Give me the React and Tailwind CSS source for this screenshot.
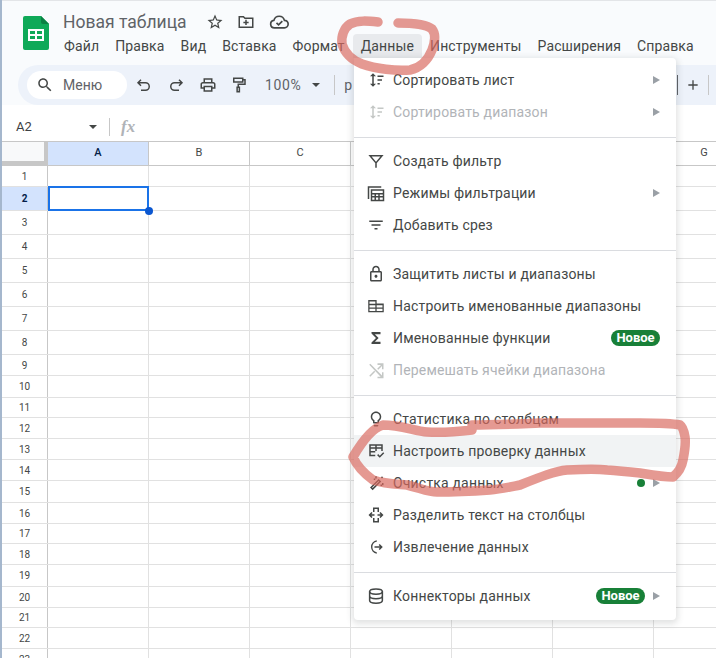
import React from "react";

const rowHeights = [21, 24, 24, 24, 24, 24, 24, 24, 21, 22, 20, 21, 21, 21, 22, 21, 20, 21, 22, 21, 20, 21, 21];
const columns = ["A", "B", "C", "D", "E", "F", "G"];
const topMenu = ["Файл", "Правка", "Вид", "Вставка", "Формат", "Данные", "Инструменты", "Расширения", "Справка"];

const Svg = ({ children, size = 18, className = "" }) => (
  <svg width={size} height={size} viewBox="0 0 24 24" fill="currentColor" className={"shrink-0 " + className}>
    {children}
  </svg>
);

const Line = ({ children, width = 2 }) => (
  <svg width="18" height="18" viewBox="0 0 24 24" fill="none" stroke="currentColor" strokeWidth={width} className="shrink-0">
    {children}
  </svg>
);

const SortIcon = () => (
  <Svg>
    <path d="M8 3l4 4H9v10h3l-4 4-4-4h3V7H4z" />
    <path d="M14 6h8v2h-8zM14 11h6v2h-6zM14 16h3v2h-3z" />
  </Svg>
);
const FilterIcon = () => (
  <Line>
    <path d="M4 5h16l-8 9.500zM12 14v7" />
  </Line>
);
const FilterViewsIcon = () => (
  <Svg>
    <path d="M1 3h18v2H3v15H1zM5 7h18v16H5zm2 2v3h14V9zm0 5v2h3v-2zm5 0v2h3v-2zm5 0v2h4v-2zM7 18v3h3v-3zm5 0v3h3v-3zm5 0v3h4v-3z" fillRule="evenodd" />
  </Svg>
);
const SlicerIcon = () => (
  <Svg>
    <path d="M3 6h18v2H3zM6 11h12v2H6zM10 16h4v2h-4z" />
  </Svg>
);
const LockIcon = () => (
  <Svg>
    <path d="M18 8h-1V6c0-2.760-2.240-5-5-5S7 3.240 7 6v2H6c-1.100 0-2 .900-2 2v10c0 1.100.900 2 2 2h12c1.100 0 2-.900 2-2V10c0-1.100-.900-2-2-2zM9 6c0-1.660 1.340-3 3-3s3 1.340 3 3v2H9V6zm9 14H6V10h12v10zm-6-3c1.100 0 2-.900 2-2s-.900-2-2-2-2 .900-2 2 .900 2 2 2z" />
  </Svg>
);
const NamedRangeIcon = () => (
  <Line width={1.7}>
    <path d="M2.500 5h9.500v14.500H2.500zM12 9.500h9.500v10H12M2.500 10h19M2.500 14.700h19" />
  </Line>
);
const SigmaIcon = () => (
  <Svg>
    <path d="M6 4h12v3H10.500l5 5-5 5H18v3H6v-2l6-6-6-6z" />
  </Svg>
);
const ShuffleIcon = () => (
  <Svg>
    <path d="M3 5l1.400-1.400L20 19.200V15h2v8h-8v-2h4.200zM14 3h8v8h-2V6.800l-5 5-1.400-1.400 5-5H14zM9.600 13l1.400 1.400-6.600 6.600L3 19.600z" />
  </Svg>
);
const BulbIcon = () => (
  <Svg>
    <path d="M9 21c0 .550.450 1 1 1h4c.550 0 1-.450 1-1v-1H9v1zm3-19C8.140 2 5 5.140 5 9c0 2.380 1.190 4.470 3 5.740V17c0 .550.450 1 1 1h6c.550 0 1-.450 1-1v-2.260c1.810-1.270 3-3.360 3-5.740 0-3.860-3.140-7-7-7zm2.850 11.100l-.850.600V16h-4v-2.300l-.850-.600C7.800 12.160 7 10.630 7 9c0-2.760 2.240-5 5-5s5 2.240 5 5c0 1.630-.800 3.160-2.150 4.100z" />
  </Svg>
);
const ValidationIcon = () => (
  <Svg>
    <path d="M3 3h18v9h-2V9h-6v3h-2V9H5v3h6v2H5v3h6v2H3zm10 2v2h6V5zM5 5v2h6V5z" fillRule="evenodd" />
    <path d="M13.500 17.500l1.400-1.400 2.100 2.100 4.600-4.600 1.400 1.400-6 6z" />
  </Svg>
);
const WandIcon = () => (
  <Svg>
    <path d="M15.500 6.500l3.500 3.500L7.500 21.500 4 18zm0 2.800L6.800 18l.7.700 8.700-8.700z" fillRule="evenodd" />
    <path d="M11 3h2v3h-2zM20 3l1.500 1.500L20 6l-1.500-1.500zM20 12h2v3h-2zM9 6h2v2H9zM18 14h2v2h-2z" />
  </Svg>
);
const SplitIcon = () => (
  <Svg>
    <path d="M8 2h8v6h-2V4h-4v4H8zM8 16h2v4h4v-4h2v6H8zM6 8l1.400 1.400L5.800 11H10v2H5.800l1.600 1.600L6 16l-4-4zM18 8l4 4-4 4-1.400-1.400 1.600-1.600H14v-2h4.200l-1.600-1.600z" />
  </Svg>
);
const ExtractIcon = () => (
  <Svg>
    <path d="M13 3.100v2A7 7 0 0 0 13 18.900v2A9 9 0 0 1 13 3.100z" />
    <path d="M17 8l4 4-4 4-1.400-1.400 1.600-1.600H10v-2h7.200l-1.600-1.600z" />
  </Svg>
);
const DatabaseIcon = () => (
  <Line>
    <ellipse cx="12" cy="6" rx="8.500" ry="3.500" />
    <path d="M3.500 6v12c0 1.900 3.800 3.500 8.500 3.500s8.500-1.600 8.500-3.500V6M3.500 12c0 1.900 3.800 3.500 8.500 3.500s8.500-1.600 8.500-3.500" />
  </Line>
);

const Arrow = () => <span className="ml-2 w-0 h-0 border-y-[4px] border-y-transparent border-l-[7px] border-l-[#9aa0a6]" />;

const Badge = () => (
  <span className="h-4 w-[49px] text-center rounded-full bg-[#188038] text-white text-[13px] leading-4 font-bold">Новое</span>
);

const MenuItem = ({ icon, label, disabled, active, arrow, badge, dot }) => (
  <div className={"h-8 flex items-center pl-[13px] pr-[16px] " + (active ? "bg-[#f1f3f4] " : "") + (disabled ? "text-[#b1b4b8]" : "text-[#444746]")}>
    <span className={"w-[26px] flex " + (disabled ? "text-[#c4c7c5]" : "")}>{icon}</span>
    <span className="flex-1 text-[14px] tracking-[0.18px] whitespace-nowrap">{label}</span>
    {badge && <Badge />}
    {dot && <span className="w-2 h-2 rounded-full bg-[#188038]" />}
    {arrow && <Arrow />}
  </div>
);

const Separator = () => <div className="h-px bg-[#dadce0] mt-[9px] mb-[7px]" />;

const DataMenu = () => (
  <div className="absolute left-[354px] top-[58px] w-[322px] pt-[6px] pb-2 bg-white rounded-b rounded-tr shadow-[0_2px_6px_2px_rgba(60,64,67,0.15)]">
    <MenuItem icon={<SortIcon />} label="Сортировать лист" arrow />
    <MenuItem icon={<SortIcon />} label="Сортировать диапазон" disabled arrow />
    <Separator />
    <MenuItem icon={<FilterIcon />} label="Создать фильтр" />
    <MenuItem icon={<FilterViewsIcon />} label="Режимы фильтрации" arrow />
    <MenuItem icon={<SlicerIcon />} label="Добавить срез" />
    <Separator />
    <MenuItem icon={<LockIcon />} label="Защитить листы и диапазоны" />
    <MenuItem icon={<NamedRangeIcon />} label="Настроить именованные диапазоны" />
    <MenuItem icon={<SigmaIcon />} label="Именованные функции" badge />
    <MenuItem icon={<ShuffleIcon />} label="Перемешать ячейки диапазона" disabled />
    <Separator />
    <MenuItem icon={<BulbIcon />} label="Статистика по столбцам" />
    <MenuItem icon={<ValidationIcon />} label="Настроить проверку данных" active />
    <MenuItem icon={<WandIcon />} label="Очистка данных" dot arrow />
    <MenuItem icon={<SplitIcon />} label="Разделить текст на столбцы" />
    <MenuItem icon={<ExtractIcon />} label="Извлечение данных" />
    <Separator />
    <MenuItem icon={<DatabaseIcon />} label="Коннекторы данных" badge arrow />
  </div>
);

const SheetsLogo = () => (
  <svg width="26" height="34" viewBox="0 0 26 34" className="shrink-0">
    <path d="M2 0h16l8 8v24a2 2 0 0 1-2 2H2a2 2 0 0 1-2-2V2a2 2 0 0 1 2-2z" fill="#0fa958" />
    <path d="M18 0l8 8h-6a2 2 0 0 1-2-2z" fill="#0b8043" />
    <path d="M5 13h16v12H5zm2 2v3h5v-3zm7 0v3h5v-3zm-7 5v3h5v-3zm7 0v3h5v-3z" fill="#fff" fillRule="evenodd" />
  </svg>
);

const Header = () => (
  <div className="h-[65px] flex pl-[21px] pt-[15px] border-t border-[#e3e5e8]">
    <SheetsLogo />
    <div className="ml-[14px] -mt-[7px]">
      <div className="h-[26px] flex items-center text-[17.5px] text-[#5f6368] leading-6">
        <span>Новая таблица</span>
        <svg width="18" height="18" viewBox="0 0 24 24" fill="#444746" className="ml-[19px]">
          <path d="M22 9.240l-7.190-.620L12 2 9.190 8.630 2 9.240l5.460 4.730L5.820 21 12 17.270 18.180 21l-1.630-7.030L22 9.240zM12 15.400l-3.760 2.270 1-4.280-3.320-2.880 4.380-.380L12 6.100l1.710 4.040 4.380.380-3.320 2.880 1 4.280L12 15.400z" />
        </svg>
        <svg width="18" height="18" viewBox="0 0 24 24" fill="#444746" className="ml-[13px]">
          <path d="M2 4h7l2 2h11v14H2zm2 2v12h16V8h-9.800l-2-2zm7 3h2v2.500h2.500v2H13V16h-2v-2.500H8.500v-2H11z" fillRule="evenodd" />
        </svg>
        <svg width="20" height="20" viewBox="0 0 24 24" fill="none" stroke="#444746" strokeWidth="2" className="ml-[14px]">
          <path d="M6.500 19a4.500 4.500 0 0 1-.6-8.960A6.500 6.500 0 0 1 18.500 10a4.500 4.500 0 0 1 0 9z" />
          <path d="M9 13l2.500 2.500L16 11" />
        </svg>
      </div>
      <div className="flex h-6 items-center -ml-[7px] -mt-px text-[14px] tracking-[0.13px] text-[#444746]">
        {topMenu.map((m) => (
          <span key={m} className={"px-2 h-6 leading-6 rounded-t whitespace-nowrap " + (m === "Данные" ? "bg-[#e8eaed]" : "")}>
            {m}
          </span>
        ))}
      </div>
    </div>
  </div>
);

const Toolbar = () => (
  <div className="h-[40px] ml-[16px] pl-[9px] rounded-l-full bg-[#edf2fa] flex items-center text-[#444746]">
    <div className="w-[100px] h-[28px] rounded-full bg-white flex items-center pl-[9px]">
      <svg width="18" height="18" viewBox="0 0 24 24" fill="#444746">
        <path d="M15.500 14h-.790l-.280-.270C15.410 12.590 16 11.110 16 9.500 16 5.910 13.090 3 9.500 3S3 5.910 3 9.500 5.910 16 9.500 16c1.610 0 3.090-.590 4.230-1.570l.270.280v.790l5 4.990L20.490 19l-4.990-5zm-6 0C7.010 14 5 11.990 5 9.500S7.010 5 9.500 5 14 7.010 14 9.500 11.990 14 9.500 14z" />
      </svg>
      <span className="ml-[9px] text-[14px] text-[#5f6368]">Меню</span>
    </div>
    <svg width="18" height="18" viewBox="0 0 24 24" fill="none" stroke="#444746" strokeWidth="2" className="ml-[8px]">
      <path d="M8 5L4 9l4 4M4 9h10a5 5 0 0 1 0 10H8" />
    </svg>
    <svg width="18" height="18" viewBox="0 0 24 24" fill="none" stroke="#444746" strokeWidth="2" className="ml-[14px]">
      <path d="M16 5l4 4-4 4M20 9H10a5 5 0 0 0 0 10h6" />
    </svg>
    <svg width="18" height="18" viewBox="0 0 24 24" fill="#444746" className="ml-[14px]">
      <path d="M19 8h-1V3H6v5H5c-1.660 0-3 1.340-3 3v6h4v4h12v-4h4v-6c0-1.660-1.340-3-3-3zM8 5h8v3H8V5zm8 12v2H8v-4h8v2zm2-2v-2H6v2H4v-4c0-.550.450-1 1-1h14c.550 0 1 .450 1 1v4h-2z" />
    </svg>
    <svg width="18" height="18" viewBox="0 0 24 24" fill="none" stroke="#444746" strokeWidth="2" className="ml-[13px]">
      <path d="M5 3h12v5H5zM17 5h3v6h-9v4M9.500 15h3v6h-3z" />
    </svg>
    <span className="ml-[17px] text-[14px] tracking-[0.6px] text-[#5f6368]">100%</span>
    <span className="ml-[11px] w-0 h-0 border-x-[4px] border-x-transparent border-t-[4px] border-t-[#444746]" />
    <span className="ml-[14px] w-px h-5 bg-[#c7c7c7]" />
    <span className="ml-[9px] text-[14px] text-[#5f6368]">р</span>
    <div className="ml-auto flex items-center h-full">
      <span className="w-px h-5 bg-[#5f6368] mr-[7px]" />
      <svg width="16" height="16" viewBox="0 0 24 24" fill="#444746" className="mr-[7px]">
        <path d="M19 13h-6v6h-2v-6H5v-2h6V5h2v6h6z" />
      </svg>
      <span className="w-px h-5 bg-[#c7c7c7] mr-[7px]" />
    </div>
  </div>
);

const Caret = () => <span className="w-0 h-0 border-x-[4px] border-x-transparent border-t-[4px] border-t-[#444746]" />;

const FormulaBar = () => (
  <div className="h-[30px] mt-[7px] flex items-center border-b border-[#c7c7c7]">
    <span className="ml-[14px] w-[73px] text-[13px] text-[#3c4043]">A2</span>
    <Caret />
    <span className="ml-[12px] w-px h-[18px] bg-[#c7c7c7]" />
    <span className="ml-[11px] text-[17px] italic font-bold text-[#b0b3b8] font-['Liberation_Serif',serif]">fx</span>
  </div>
);

const Grid = () => (
  <div className="relative">
    <div className="flex h-[24px] border-b border-[#c7c7c7]">
      <div className="w-[46px] shrink-0 bg-[#f8f9fa] border-r-[4px] border-b-[4px] border-[#c7c7c7]" />
      {columns.map((c) => (
        <div key={c} className={"w-[101px] shrink-0 flex items-center justify-center text-[11px] border-r border-[#c7c7c7] " + (c === "A" ? "bg-[#d3e3fd] font-medium text-[#041e49]" : "text-[#444746]")}>
          {c}
        </div>
      ))}
    </div>
    {rowHeights.map((h, i) => (
      <div key={i} className="flex border-b border-[#e1e1e1]" style={{ height: h }}>
        <div className={"w-[46px] shrink-0 flex items-center justify-center text-[10px] border-r border-[#c7c7c7] " + (i === 1 ? "bg-[#d3e3fd] font-bold text-[#041e49]" : "text-[#444746]")}>
          {i + 1}
        </div>
        {columns.map((c) => (
          <div key={c} className="w-[101px] shrink-0 border-r border-[#e1e1e1]" />
        ))}
      </div>
    ))}
    <div className="absolute left-[46px] top-[44px] w-[101px] h-[25px] border-2 border-[#1a73e8]" />
    <div className="absolute left-[143px] top-[65px] w-2 h-2 rounded-full bg-[#0b57d0]" />
  </div>
);

const Scribbles = () => (
  <svg width="716" height="658" className="absolute left-0 top-0 pointer-events-none" fill="none" stroke="#d9695f" strokeOpacity="0.68" strokeWidth="9.500" strokeLinecap="round" strokeLinejoin="round">
    <path d="M378 22C368 21 358 20 350 24C344 28 341 36 342 44C345 54 352 60 362 64C376 69 396 71 410 70C420 68 428 60 432 50C435 42 436 34 432 29C426 24 412 23 398 23" />
    <path d="M472 430C455 432 440 433 427 432C415 431 400 425 383 425C372 428 360 445 353 457C356 464 362 472 373 480C385 484 395 484 407 485C420 488 428 492 437 492C455 492 475 491 490 490C502 489 510 487 520 485C540 477 555 471 567 470C585 469 600 469 607 470C620 471 630 472 640 473C652 475 663 477 673 477C679 472 682 466 683 460C685 450 686 444 685 437C684 431 683 427 680 425C670 423 655 423 640 423C610 423 575 423 540 423C515 424 495 425 472 425" />
  </svg>
);

export default function App() {
  return (
    <div className="relative w-[716px] h-[658px] overflow-hidden bg-white font-['Roboto',sans-serif] pl-[2px]">
      <div className="absolute left-0 top-0 w-[2px] h-full bg-[#a5b7cd]" />
      <div className="bg-[#f9fbfd]">
        <Header />
        <Toolbar />
      </div>
      <FormulaBar />
      <Grid />
      <DataMenu />
      <Scribbles />
    </div>
  );
}
